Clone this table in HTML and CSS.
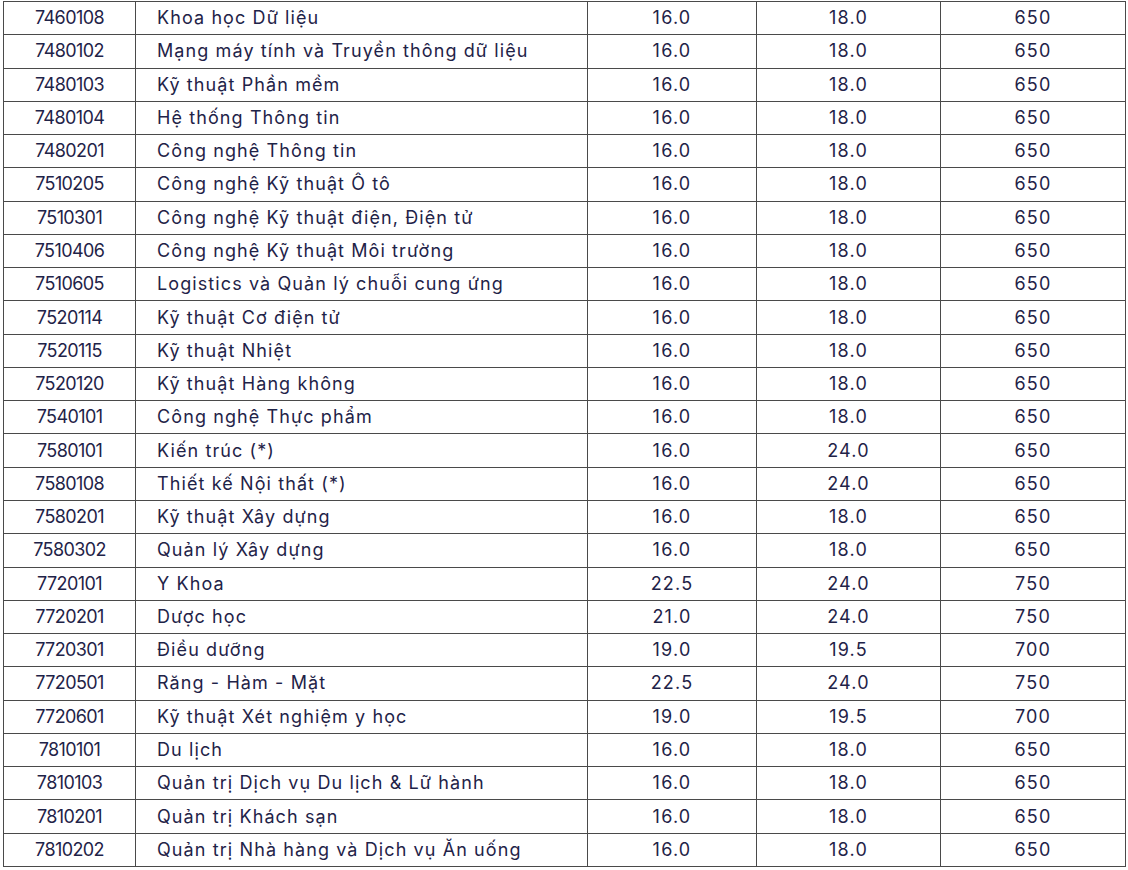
FILE: index.html
```html
<!DOCTYPE html>
<html lang="vi">
<head>
<meta charset="utf-8">
<title>Bảng điểm</title>
<link rel="stylesheet" href="styles.css">
</head>
<body>
<table class="scores">
<colgroup>
<col class="c-code"><col class="c-name"><col class="c-a"><col class="c-b"><col class="c-c">
</colgroup>
<tbody>
<tr><td class="code">7460108</td><td class="name">Khoa học Dữ liệu</td><td>16.0</td><td>18.0</td><td>650</td></tr>
<tr><td class="code">7480102</td><td class="name">Mạng máy tính và Truyền thông dữ liệu</td><td>16.0</td><td>18.0</td><td>650</td></tr>
<tr><td class="code">7480103</td><td class="name">Kỹ thuật Phần mềm</td><td>16.0</td><td>18.0</td><td>650</td></tr>
<tr><td class="code">7480104</td><td class="name">Hệ thống Thông tin</td><td>16.0</td><td>18.0</td><td>650</td></tr>
<tr><td class="code">7480201</td><td class="name">Công nghệ Thông tin</td><td>16.0</td><td>18.0</td><td>650</td></tr>
<tr><td class="code">7510205</td><td class="name">Công nghệ Kỹ thuật Ô tô</td><td>16.0</td><td>18.0</td><td>650</td></tr>
<tr><td class="code">7510301</td><td class="name">Công nghệ Kỹ thuật điện, Điện tử</td><td>16.0</td><td>18.0</td><td>650</td></tr>
<tr><td class="code">7510406</td><td class="name">Công nghệ Kỹ thuật Môi trường</td><td>16.0</td><td>18.0</td><td>650</td></tr>
<tr><td class="code">7510605</td><td class="name">Logistics và Quản lý chuỗi cung ứng</td><td>16.0</td><td>18.0</td><td>650</td></tr>
<tr><td class="code">7520114</td><td class="name">Kỹ thuật Cơ điện tử</td><td>16.0</td><td>18.0</td><td>650</td></tr>
<tr><td class="code">7520115</td><td class="name">Kỹ thuật Nhiệt</td><td>16.0</td><td>18.0</td><td>650</td></tr>
<tr><td class="code">7520120</td><td class="name">Kỹ thuật Hàng không</td><td>16.0</td><td>18.0</td><td>650</td></tr>
<tr><td class="code">7540101</td><td class="name">Công nghệ Thực phẩm</td><td>16.0</td><td>18.0</td><td>650</td></tr>
<tr><td class="code">7580101</td><td class="name">Kiến trúc (*)</td><td>16.0</td><td>24.0</td><td>650</td></tr>
<tr><td class="code">7580108</td><td class="name">Thiết kế Nội thất (*)</td><td>16.0</td><td>24.0</td><td>650</td></tr>
<tr><td class="code">7580201</td><td class="name">Kỹ thuật Xây dựng</td><td>16.0</td><td>18.0</td><td>650</td></tr>
<tr><td class="code">7580302</td><td class="name">Quản lý Xây dựng</td><td>16.0</td><td>18.0</td><td>650</td></tr>
<tr><td class="code">7720101</td><td class="name">Y Khoa</td><td>22.5</td><td>24.0</td><td>750</td></tr>
<tr><td class="code">7720201</td><td class="name">Dược học</td><td>21.0</td><td>24.0</td><td>750</td></tr>
<tr><td class="code">7720301</td><td class="name">Điều dưỡng</td><td>19.0</td><td>19.5</td><td>700</td></tr>
<tr><td class="code">7720501</td><td class="name">Răng - Hàm - Mặt</td><td>22.5</td><td>24.0</td><td>750</td></tr>
<tr><td class="code">7720601</td><td class="name">Kỹ thuật Xét nghiệm y học</td><td>19.0</td><td>19.5</td><td>700</td></tr>
<tr><td class="code">7810101</td><td class="name">Du lịch</td><td>16.0</td><td>18.0</td><td>650</td></tr>
<tr><td class="code">7810103</td><td class="name">Quản trị Dịch vụ Du lịch &amp; Lữ hành</td><td>16.0</td><td>18.0</td><td>650</td></tr>
<tr><td class="code">7810201</td><td class="name">Quản trị Khách sạn</td><td>16.0</td><td>18.0</td><td>650</td></tr>
<tr><td class="code">7810202</td><td class="name">Quản trị Nhà hàng và Dịch vụ Ăn uống</td><td>16.0</td><td>18.0</td><td>650</td></tr>
</tbody>
</table>
</body>
</html>
```
FILE: styles.css
```css
html, body {
  margin: 0;
  padding: 0;
  background: #ffffff;
}
body {
  padding: 1px 0 0 3px;
  font-family: Inter, "Noto Sans", "Liberation Sans", sans-serif;
  color: #1f2348;
}
.scores {
  border-collapse: collapse;
  table-layout: fixed;
  width: 1122px;
  font-size: 18px;
}
.c-code { width: 132px; }
.c-name { width: 452px; }
.c-a { width: 169px; }
.c-b { width: 184px; }
.c-c { width: 185px; }
.scores td {
  border: 1px solid #4a4a4a;
  height: 32.27px;
  padding: 0;
  text-align: center;
  vertical-align: middle;
  line-height: 1;
  white-space: nowrap;
  letter-spacing: 1.2px;
}
.scores td.code {
  letter-spacing: -0.6px;
}
.scores td.name {
  text-align: left;
  padding-left: 21px;
  letter-spacing: 1.1px;
}
```
